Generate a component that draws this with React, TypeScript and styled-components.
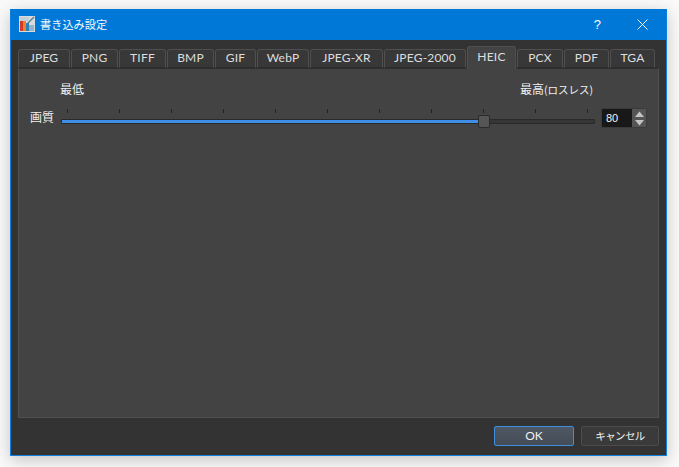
import styled, { createGlobalStyle } from 'styled-components';

const TABS = ['JPEG', 'PNG', 'TIFF', 'BMP', 'GIF', 'WebP', 'JPEG-XR', 'JPEG-2000', 'HEIC', 'PCX', 'PDF', 'TGA'];
const TAB_WIDTHS = [52, 47, 47, 47, 41, 52, 73, 82, 49, 46, 45, 45];
const ACTIVE_TAB = 'HEIC';
const TICK_COUNT = 11;

const GlobalStyle = createGlobalStyle`
  html, body {
    margin: 0;
    padding: 0;
    height: 100%;
    background: #fafafa;
    overflow: hidden;
  }
  body {
    font-family: 'Noto Sans CJK JP', 'Liberation Sans', sans-serif;
    font-size: 12px;
  }
`;

const TitleIcon = () => (
  <svg width="16" height="16" viewBox="0 0 16 16">
    <rect x="0" y="0" width="16" height="16" fill="#d8dce0" />
    <rect x="1" y="5" width="3" height="10" fill="#d8382c" />
    <rect x="4" y="5" width="3" height="10" fill="#e8862c" />
    <rect x="7" y="7" width="3" height="8" fill="#2c7fb8" />
    <rect x="10" y="9" width="5" height="6" fill="#8fb4cc" />
    <rect x="1" y="1" width="9" height="4" fill="#c2ced8" />
    <path d="M8 8 L15 1" stroke="#5c7f98" strokeWidth="1.5" fill="none" />
  </svg>
);

const HelpIcon = () => <HelpMark>?</HelpMark>;

const CloseIcon = () => (
  <svg width="11" height="11" viewBox="0 0 11 11">
    <path d="M0.5 0.5 L10.5 10.5 M10.5 0.5 L0.5 10.5" stroke="#fff" strokeWidth="1" fill="none" />
  </svg>
);

const Spinner = () => (
  <SpinBox>
    <SpinValue>80</SpinValue>
    <SpinButtons>
      <svg width="9" height="15" viewBox="0 0 9 15">
        <path d="M4.5 0.5 L9 6 L0 6 Z" fill="#c4c4c4" />
        <path d="M0 9 L9 9 L4.5 14.5 Z" fill="#c4c4c4" />
      </svg>
    </SpinButtons>
  </SpinBox>
);

export default function App() {
  return (
    <>
      <GlobalStyle />
      <Dialog>
        <TitleBar>
          <TitleIcon />
          <Title>書き込み設定</Title>
          <TitleActions>
            <HelpIcon />
            <CloseIcon />
          </TitleActions>
        </TitleBar>
        <Body>
          <TabRow>
            {TABS.map((tab, i) => (
              <Tab key={tab} $active={tab === ACTIVE_TAB} $width={TAB_WIDTHS[i]}>
                {tab}
              </Tab>
            ))}
          </TabRow>
          <Panel>
            <LabelRow>
              <span>最低</span>
              <span>
                最高<SmallText>(ロスレス)</SmallText>
              </span>
            </LabelRow>
            <SliderRow>
              <QualityLabel>画質</QualityLabel>
              <SliderColumn>
                <Ticks>
                  {Array.from({ length: TICK_COUNT }, (_, i) => (
                    <Tick key={i} />
                  ))}
                </Ticks>
                <Groove>
                  <Fill />
                  <Handle />
                </Groove>
              </SliderColumn>
              <Spinner />
            </SliderRow>
          </Panel>
          <Footer>
            <OkButton>OK</OkButton>
            <CancelButton>キャンセル</CancelButton>
          </Footer>
        </Body>
      </Dialog>
    </>
  );
}

const Dialog = styled.div`
  box-sizing: border-box;
  width: 657px;
  height: 447px;
  margin: 9px 0 0 10px;
  display: flex;
  flex-direction: column;
  border: 1px solid #0f80de;
  border-top-color: #0078d7;
  background: #333333;
  box-shadow: 0 4px 16px rgba(0, 0, 0, 0.22);
`;

const TitleBar = styled.div`
  flex: none;
  box-sizing: border-box;
  height: 30px;
  display: flex;
  align-items: center;
  padding: 0 0 2px 8px;
  background: #0078d7;
  color: #fff;
`;

const Title = styled.div`
  margin-left: 5px;
  font-size: 11.2px;
  color: #f4f8fc;
`;

const TitleActions = styled.div`
  margin-left: auto;
  display: flex;
  align-items: center;
  gap: 36px;
  padding-right: 18px;
`;

const HelpMark = styled.span`
  font-family: 'Liberation Sans', sans-serif;
  font-size: 13px;
  color: #fff;
`;

const Body = styled.div`
  flex: 1;
  min-height: 0;
  display: flex;
  flex-direction: column;
  padding: 6px 7px 9px 7px;
`;

const TabRow = styled.div`
  flex: none;
  height: 22px;
  display: flex;
  align-items: flex-end;
  position: relative;
  z-index: 1;
`;

const Tab = styled.div<{ $active: boolean; $width: number }>`
  box-sizing: border-box;
  flex: none;
  width: ${(p) => p.$width}px;
  height: ${(p) => (p.$active ? 23 : 19)}px;
  margin-bottom: ${(p) => (p.$active ? -1 : 0)}px;
  margin-right: 1px;
  display: flex;
  align-items: center;
  justify-content: center;
  padding-bottom: ${(p) => (p.$active ? 3 : 2)}px;
  border: 1px solid #4f4f4f;
  border-bottom: ${(p) => (p.$active ? 'none' : '1px solid #2c2c2c')};
  border-radius: 3px 3px 0 0;
  background: ${(p) => (p.$active ? '#434343' : '#383838')};
  color: #dedede;
  font-family: 'Lato', 'Liberation Sans', sans-serif;
  font-size: 12px;
  letter-spacing: 0.2px;
`;

const Panel = styled.div`
  box-sizing: border-box;
  flex: 1;
  min-height: 0;
  padding: 11px 0 0 0;
  background: #434343;
  border: 1px solid #505050;
  border-top-color: #2f2f2f;
  color: #f0f0f0;
`;

const LabelRow = styled.div`
  display: flex;
  justify-content: space-between;
  margin-left: 41px;
  margin-right: 65px;
  height: 18px;
  line-height: 18px;
  font-size: 12px;
`;

const SmallText = styled.span`
  font-size: 10.5px;
`;

const SliderRow = styled.div`
  display: flex;
  align-items: flex-start;
  height: 20px;
  margin-top: 10px;
  padding-left: 11px;
`;

const QualityLabel = styled.div`
  width: 31px;
  line-height: 18px;
  font-size: 12px;
`;

const SliderColumn = styled.div`
  width: 534px;
  display: flex;
  flex-direction: column;
`;

const Ticks = styled.div`
  display: flex;
  justify-content: space-between;
  height: 4px;
  margin-top: 1px;
  padding: 0 7px 0 6px;
`;

const Tick = styled.div`
  width: 1px;
  height: 4px;
  background: #222222;
`;

const Groove = styled.div`
  position: relative;
  box-sizing: border-box;
  height: 5px;
  margin-top: 6px;
  background: #363636;
  border: 1px solid #2a2a2a;
  border-radius: 1px;
`;

const Fill = styled.div`
  height: 100%;
  width: 79%;
  background: #3f8fe8;
`;

const Handle = styled.div`
  position: absolute;
  box-sizing: border-box;
  left: 416px;
  top: -5px;
  width: 12px;
  height: 13px;
  background: #555555;
  border: 1px solid #2b2b2b;
  border-radius: 2px;
`;

const SpinBox = styled.div`
  box-sizing: border-box;
  margin-left: 6px;
  width: 46px;
  height: 20px;
  display: flex;
  border: 1px solid #3a3a3a;
  border-radius: 2px;
  background: #181818;
`;

const SpinValue = styled.div`
  flex: 1;
  display: flex;
  align-items: center;
  padding-left: 4px;
  color: #f4f4f4;
  font-family: 'Liberation Sans', sans-serif;
  font-size: 11px;
`;

const SpinButtons = styled.div`
  flex: none;
  width: 14px;
  display: flex;
  align-items: center;
  justify-content: center;
  background: #555555;
`;

const Footer = styled.div`
  flex: none;
  display: flex;
  justify-content: flex-end;
  gap: 7px;
  padding-top: 8px;
`;

const FooterButton = styled.div`
  box-sizing: border-box;
  height: 20px;
  display: flex;
  align-items: center;
  justify-content: center;
  padding-bottom: 2px;
  border-radius: 2px;
  color: #f0f0f0;
`;

const OkButton = styled(FooterButton)`
  width: 80px;
  border: 1px solid #3f8fe0;
  background: linear-gradient(#4e5864, #444c56);
  font-family: 'Lato', 'Liberation Sans', sans-serif;
  font-size: 12px;
`;

const CancelButton = styled(FooterButton)`
  width: 78px;
  border: 1px solid #4c4c4c;
  background: #3a3a3a;
  font-size: 10.5px;
  letter-spacing: -0.6px;
`;
